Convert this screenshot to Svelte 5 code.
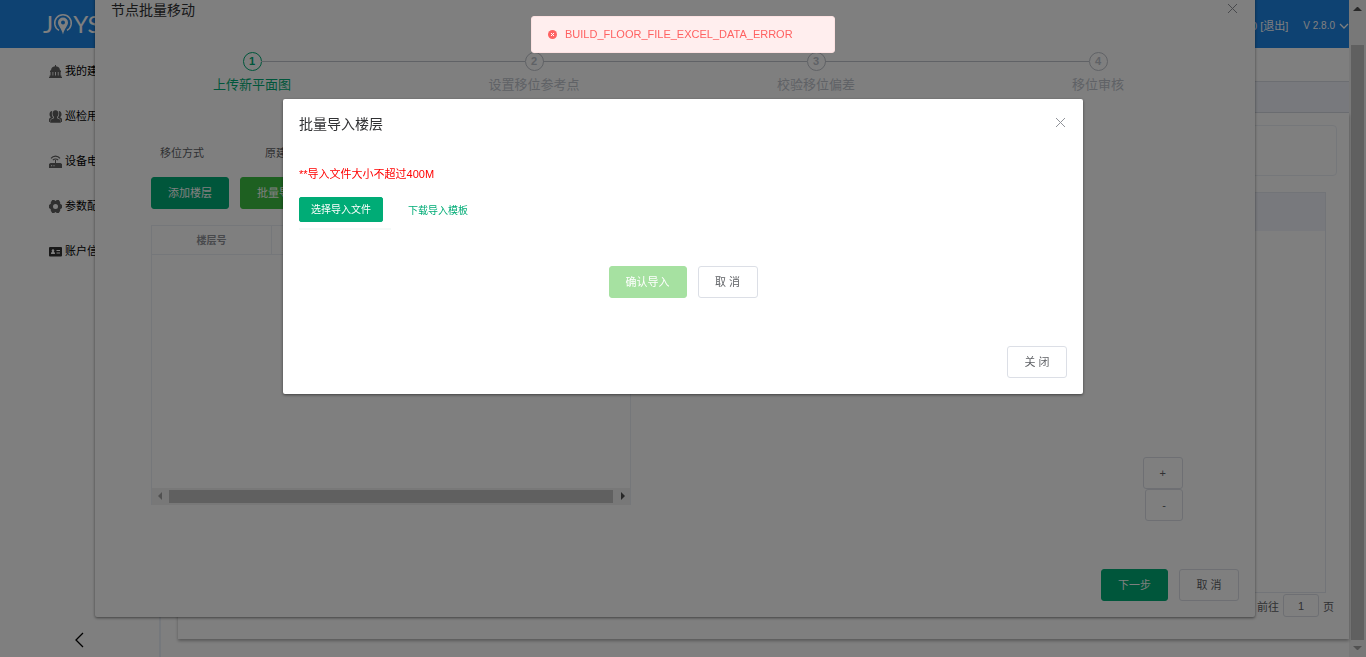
<script lang="ts">
  const menu = [
    { icon: 'building', label: '我的建筑' },
    { icon: 'users', label: '巡检用户' },
    { icon: 'router', label: '设备电量' },
    { icon: 'gear', label: '参数配置' },
    { icon: 'card', label: '账户信息' },
  ];

  const steps = ['上传新平面图', '设置移位参考点', '校验移位偏差', '移位审核'];
  let activeStep = 0;
  let pageNo = 1;
</script>

<div class="app">
  <div class="page">
    <header class="topbar">
      <a class="logo" href="#home" aria-label="home">
        <span>J</span>
        <svg width="20" height="22" viewBox="0 0 20 22" fill="none" stroke="currentColor">
          <path d="M6 17.300A8.300 8.300 0 1 1 14 17.300" stroke-width="1.500" />
          <path d="M10 4.500a5 5 0 0 0-5 5c0 3.500 3.500 5.500 5 12 1.500-6.500 5-8.500 5-12a5 5 0 0 0-5-5z" fill="currentColor" stroke="none" />
          <circle cx="10" cy="9.500" r="2" fill="#1c84e4" stroke="none" />
        </svg>
        <span>YS</span>
      </a>
      <div class="account">
        <span class="user">admin0 <a href="#logout">[退出]</a></span>
        <button class="version">
          V 2.8.0
          <svg width="10" height="6" viewBox="0 0 10 6"><path d="M1 1l4 4 4-4" fill="none" stroke="currentColor" stroke-width="1.300" /></svg>
        </button>
      </div>
    </header>

    <div class="columns">
      <nav class="sidebar">
        <ul>
          {#each menu as item}
            <li>
              <a href="#{item.icon}">
                <svg class:dark={item.icon === 'card'} width="13" height="13" viewBox="0 0 13 13" fill="currentColor">
                  {#if item.icon === 'building'}
                    <path d="M6 0h1v1.200a4.500 4.500 0 0 1 4 4.300H2a4.500 4.500 0 0 1 4-4.300zM1 5.500h11v1.500H1zM1.500 7h2v4h-2zM4.300 7h1.800v4H4.300zM7 7h1.800v4H7zM9.600 7h2v4h-2zM.6 10.600h11.800V12h.6v1H0v-1h.6z" />
                  {:else if item.icon === 'users'}
                    <path d="M6.500.3c2 0 3 1.400 3 3.300 0 1.500-.7 2.600-1.400 3.200v1.400l2.800 1.300c.7.400.9 1.400.9 3.300H1.200c0-1.900.2-2.900.9-3.300l2.800-1.300V6.800c-.7-.6-1.400-1.700-1.400-3.200 0-1.900 1-3.300 3-3.300z" />
                    <path d="M3.300 1C1.500.9.500 2.300.5 4.200c0 1.400.5 2.200 1.200 2.700v.7L0 8.800V12h.9c.1-2 .3-2.800 3.300-4.300C3 6 2.300 3.500 3.300 1zM9.700 1c1.800-.1 2.800 1.300 2.800 3.200 0 1.400-.5 2.200-1.200 2.700v.7l1.700 1.200V12h-.9c-.1-2-.3-2.800-3.300-4.300C10 6 10.700 3.500 9.700 1z" />
                  {:else if item.icon === 'router'}
                    <path d="M1.500 8H6V5h1v3h4.500L13 9v4H0V9zM2 10.200v1h1.200v-1zm2.400 0v1h1.200v-1z" fill-rule="evenodd" />
                    <path d="M2 3.400a5.600 5.600 0 0 1 9 0M3.900 5.200a3.400 3.400 0 0 1 5.200 0" fill="none" stroke="currentColor" stroke-width="1.200" />
                  {:else if item.icon === 'gear'}
                    <path d="M3.200 0h2l1.300.9L7.800 0h2l1.400 2.200v1.600L13 5v3l-1.800 1.200v1.600L9.800 13h-2l-1.300-.9-1.300.9h-2l-1.400-2.200V9.200L0 8V5l1.800-1.200V2.200zM6.500 4a2.500 2.500 0 1 0 0 5 2.500 2.500 0 0 0 0-5z" fill-rule="evenodd" />
                  {:else}
                    <path d="M1 2h11a1 1 0 0 1 1 1v7.500a1 1 0 0 1-1 1H1a1 1 0 0 1-1-1V3a1 1 0 0 1 1-1zm3 2.300a1.300 1.300 0 0 0-.7 2.400C2.300 7 2 7.700 2 9h4c0-1.300-.3-2-1.300-2.300A1.300 1.300 0 0 0 4 4.300zM7.500 5v1H11V5zm0 2.500v1H11v-1z" fill-rule="evenodd" />
                  {/if}
                </svg>
                <span>{item.label}</span>
              </a>
            </li>
          {/each}
        </ul>
        <button class="collapse" aria-label="收起">
          <svg width="9" height="16" viewBox="0 0 9 16"><path d="M8 1L1 8l7 7" fill="none" stroke="currentColor" stroke-width="1.300" /></svg>
        </button>
      </nav>

      <main>
        <div class="tabs"></div>
        <div class="crumbs"></div>
        <section class="panel">
          <div class="search"></div>
          <div class="list"><div class="list-head"></div></div>
          <div class="pager">
            <label for="pageNo">前往</label>
            <input id="pageNo" bind:value={pageNo} />
            <span>页</span>
          </div>
        </section>
      </main>
    </div>

    <div class="floor-layer">
      <div class="dialog floor-dialog" role="dialog" aria-labelledby="floorTitle">
        <div class="dialog-header">
          <h2 id="floorTitle">节点批量移动</h2>
          <button class="close" aria-label="关闭节点批量移动">
            <svg width="9" height="9" viewBox="0 0 9 9"><path d="M0 0l9 9M9 0L0 9" stroke="currentColor" /></svg>
          </button>
        </div>
        <ol class="steps">
          {#each steps as title, i}
            <li class:active={i === activeStep}>
              <span class="num">{i + 1}</span>
              <span class="step-title">{title}</span>
            </li>
          {/each}
        </ol>
        <div class="mode">
          <span>移位方式</span>
          <span>原建筑移位</span>
        </div>
        <div class="workspace">
          <div class="floors">
            <div class="actions">
              <button class="btn primary">添加楼层</button>
              <button class="btn success">批量导入</button>
            </div>
            <div class="table-box">
              <table>
                <thead>
                  <tr><th class="floor-no">楼层号</th><th>楼层名称</th></tr>
                </thead>
              </table>
              <div class="hbar">
                <i class="arrow left"></i>
                <div class="thumb"></div>
                <i class="arrow right"></i>
              </div>
            </div>
          </div>
          <div class="zoom">
            <button class="btn">+</button>
            <button class="btn">-</button>
          </div>
        </div>
        <div class="dialog-footer">
          <button class="btn primary">下一步</button>
          <button class="btn plain">取 消</button>
        </div>
      </div>
    </div>
  </div>

  <div class="vbar">
    <i class="arrow up"></i>
    <div class="thumb"></div>
    <i class="arrow down"></i>
  </div>
</div>

<div class="mask">
  <div class="dialog import-dialog" role="dialog" aria-labelledby="importTitle">
    <div class="dialog-header">
      <h2 id="importTitle">批量导入楼层</h2>
      <button class="close" aria-label="关闭批量导入楼层">
        <svg width="9" height="9" viewBox="0 0 9 9"><path d="M0 0l9 9M9 0L0 9" stroke="currentColor" /></svg>
      </button>
    </div>
    <div class="import-body">
      <p class="tip">**导入文件大小不超过400M</p>
      <div class="upload">
        <button class="btn primary small">选择导入文件</button>
        <a href="#template">下载导入模板</a>
      </div>
      <div class="progress"></div>
      <div class="confirm">
        <button class="btn success" disabled>确认导入</button>
        <button class="btn plain">取 消</button>
      </div>
    </div>
    <div class="dialog-footer">
      <button class="btn plain">关 闭</button>
    </div>
  </div>
</div>

<div class="message" role="alert">
  <svg width="9" height="9" viewBox="0 0 9 9">
    <circle cx="4.500" cy="4.500" r="4.500" fill="currentColor" />
    <path d="M3 3l3 3M6 3L3 6" stroke="#fff" />
  </svg>
  <p>BUILD_FLOOR_FILE_EXCEL_DATA_ERROR</p>
</div>

<style>
  :global(body) {
    overflow: hidden;
    background: #fff;
    color: #606266;
    font-family: 'Liberation Sans', 'Noto Sans CJK SC', sans-serif;
    font-size: 11px;
  }
  :global(*) {
    box-sizing: border-box;
  }
  ul,
  ol {
    list-style: none;
    margin: 0;
    padding: 0;
  }
  a {
    color: inherit;
    text-decoration: none;
  }
  p {
    margin: 0;
  }
  svg {
    flex: none;
    display: block;
  }
  button,
  input {
    font: inherit;
    color: inherit;
  }

  .app {
    display: flex;
    height: 100vh;
  }
  .page {
    position: relative;
    flex: 1;
    min-width: 0;
    display: flex;
    flex-direction: column;
  }

  .topbar {
    height: 48px;
    flex: none;
    display: flex;
    align-items: center;
    justify-content: space-between;
    padding-left: 43px;
    background: #1c84e4;
    color: #fff;
  }
  .logo {
    display: flex;
    align-items: center;
    font-family: Lato, sans-serif;
    font-size: 24px;
    line-height: 24px;
  }
  .account {
    display: flex;
    align-items: center;
    gap: 15px;
    line-height: 18px;
    padding-top: 3px;
  }
  .version {
    display: flex;
    align-items: center;
    gap: 4px;
    padding: 0;
    border: 0;
    background: none;
    font-size: 10px;
  }

  .columns {
    flex: 1;
    min-height: 0;
    display: flex;
  }
  .sidebar {
    width: 161px;
    flex: none;
    display: flex;
    flex-direction: column;
    justify-content: space-between;
    align-items: center;
    padding-bottom: 9px;
    border-right: 2px solid #ebf0f8;
  }
  .sidebar ul {
    align-self: stretch;
  }
  .sidebar li a {
    display: flex;
    align-items: center;
    gap: 3px;
    height: 45px;
    padding: 0 0 2px 49px;
    color: #000;
  }
  .sidebar li svg {
    margin-top: 4px;
    color: #606060;
  }
  .sidebar li svg.dark {
    color: #303030;
  }
  .collapse {
    padding: 0;
    border: 0;
    background: none;
    color: #000;
  }

  main {
    flex: 1;
    min-width: 0;
    display: flex;
    flex-direction: column;
  }
  .tabs {
    height: 33px;
  }
  .crumbs {
    height: 32px;
    background: #f0f3fa;
    border: 1px solid #d8dce5;
    border-width: 1px 0;
  }
  .panel {
    flex: 1;
    display: flex;
    flex-direction: column;
    margin: 0 0 18px 17px;
    padding-top: 12px;
    box-shadow: 0 2px 3px rgba(0, 0, 0, 0.3);
  }
  .search {
    height: 51px;
    margin: 0 12px 16px;
    border: 1px solid #ebeef5;
    border-radius: 4px;
  }
  .list {
    flex: 1;
    margin: 0 23px 0 12px;
    border: 1px solid #e4e8f0;
  }
  .list-head {
    height: 38px;
    background: #f0f2fa;
  }
  .pager {
    display: flex;
    align-items: center;
    justify-content: flex-end;
    gap: 4px;
    padding: 1px 15px 22px;
  }
  .pager input {
    width: 36px;
    height: 23px;
    padding: 0;
    border: 1px solid #dcdfe6;
    border-radius: 3px;
    background: #fff;
    text-align: center;
  }

  .dialog {
    display: flex;
    flex-direction: column;
    background: #fff;
    border-radius: 2px;
    box-shadow: 0 1px 3px rgba(0, 0, 0, 0.5);
  }
  .dialog-header {
    display: flex;
    justify-content: space-between;
    padding: 16px;
  }
  .dialog-header h2 {
    margin: 0;
    color: #303133;
    font-size: 14px;
    font-weight: 400;
    line-height: 18px;
  }
  .close {
    display: flex;
    align-items: center;
    height: 15px;
    padding: 0 2px;
    border: 0;
    background: none;
    color: #909399;
  }
  .dialog-footer {
    display: flex;
    justify-content: flex-end;
    gap: 11px;
    padding: 48px 16px 16px;
  }

  .btn {
    height: 32px;
    padding: 0 16px;
    border: 1px solid #dcdfe6;
    border-radius: 3px;
    background: #fff;
    line-height: 16px;
    white-space: nowrap;
  }
  .btn.plain {
    min-width: 60px;
  }
  .btn.primary {
    background: #00ac76;
    border-color: #00ac76;
    color: #fff;
  }
  .btn.success {
    background: #3cc143;
    border-color: #3cc143;
    color: #fff;
  }
  .btn.success:disabled {
    background: #a6e1a1;
    border-color: #a6e1a1;
  }
  .btn.small {
    height: 25px;
    padding: 0 11px;
    border-radius: 2px;
    font-size: 10px;
  }

  .floor-layer {
    position: absolute;
    top: -15px;
    left: 1px;
    right: 0;
    display: flex;
    justify-content: center;
  }
  .floor-dialog {
    width: 90%;
    max-width: 1160px;
  }
  .steps {
    display: flex;
    padding: 17px 16px 0;
  }
  .steps li {
    position: relative;
    flex: 1;
    display: flex;
    flex-direction: column;
    align-items: center;
    color: #c0c4cc;
  }
  .steps li + li::before {
    content: '';
    position: absolute;
    top: 9px;
    right: calc(50% + 9px);
    width: calc(100% - 18px);
    height: 1px;
    background: #c0c4cc;
  }
  .steps li.active {
    color: #00ac76;
  }
  .num {
    width: 19px;
    height: 19px;
    border: 1px solid currentColor;
    border-radius: 50%;
    font-weight: 700;
    line-height: 17px;
    text-align: center;
  }
  .step-title {
    font-size: 13px;
    line-height: 28px;
  }
  .mode {
    display: flex;
    gap: 61px;
    padding: 44px 65px 14px;
    line-height: 20px;
  }
  .workspace {
    display: flex;
    justify-content: space-between;
    align-items: flex-end;
    padding: 0 72px 0 56px;
  }
  .floors {
    width: 46%;
    min-width: 480px;
    padding-bottom: 16px;
  }
  .actions {
    display: flex;
    gap: 11px;
    padding-bottom: 16px;
  }
  .table-box {
    display: flex;
    flex-direction: column;
    height: 280px;
    border: 1px solid #ebeef5;
    border-bottom: 0;
  }
  table {
    width: 100%;
    border-spacing: 0;
    table-layout: fixed;
    margin-bottom: auto;
  }
  th {
    height: 29px;
    padding: 0 0 2px;
    border-bottom: 1px solid #ebeef5;
    color: #909399;
    font-size: 10px;
  }
  th.floor-no {
    width: 120px;
    border-right: 1px solid #ebeef5;
  }
  .zoom {
    display: flex;
    flex-direction: column;
    align-items: flex-end;
  }

  .hbar,
  .vbar {
    display: flex;
    align-items: center;
    background: #f1f1f1;
  }
  .hbar {
    height: 17px;
  }
  .hbar .thumb {
    flex: 1;
    height: 13px;
    background: #c1c1c1;
  }
  .vbar {
    width: 17px;
    flex-direction: column;
  }
  .vbar .thumb {
    flex: 1;
    width: 13px;
    margin-top: 28px;
    background: #c1c1c1;
  }
  .arrow {
    flex: none;
    width: 17px;
    height: 17px;
    border: solid transparent;
  }
  .arrow::before {
    content: '';
    display: block;
    border: 4px solid transparent;
  }
  .arrow.left {
    border-width: 4px 7px 5px 2px;
  }
  .arrow.left::before {
    border-right-color: #a3a3a3;
  }
  .arrow.right {
    border-width: 4px 2px 5px 8px;
  }
  .arrow.right::before {
    border-left-color: #505050;
  }
  .arrow.up {
    border-width: 3px 4px 6px;
  }
  .arrow.up::before {
    border-bottom-color: #505050;
  }
  .arrow.down {
    border-width: 6px 4px 3px;
  }
  .arrow.down::before {
    border-top-color: #a3a3a3;
  }

  .mask {
    position: fixed;
    inset: 0;
    display: flex;
    justify-content: center;
    align-items: flex-start;
    padding-top: 99px;
    background: rgba(0, 0, 0, 0.5);
  }
  .import-dialog {
    width: 90%;
    max-width: 800px;
  }
  .import-body {
    padding: 15px 16px 0;
  }
  .tip {
    color: #f00;
    line-height: 20px;
    padding-bottom: 13px;
  }
  .upload {
    display: flex;
    align-items: center;
    gap: 25px;
    color: #00ac76;
    font-size: 10px;
  }
  .progress {
    width: 92px;
    height: 2px;
    margin: 6px 0 36px;
    background: #f5f9f8;
  }
  .confirm {
    display: flex;
    justify-content: center;
    gap: 11px;
  }

  .message {
    position: fixed;
    top: 16px;
    left: 50%;
    transform: translateX(-50%);
    display: flex;
    align-items: center;
    gap: 8px;
    min-width: 304px;
    height: 37px;
    padding: 0 16px 1px;
    border: 1px solid #fde2e2;
    border-radius: 3px;
    background: #ffeeee;
    color: #ff6161;
  }
</style>
